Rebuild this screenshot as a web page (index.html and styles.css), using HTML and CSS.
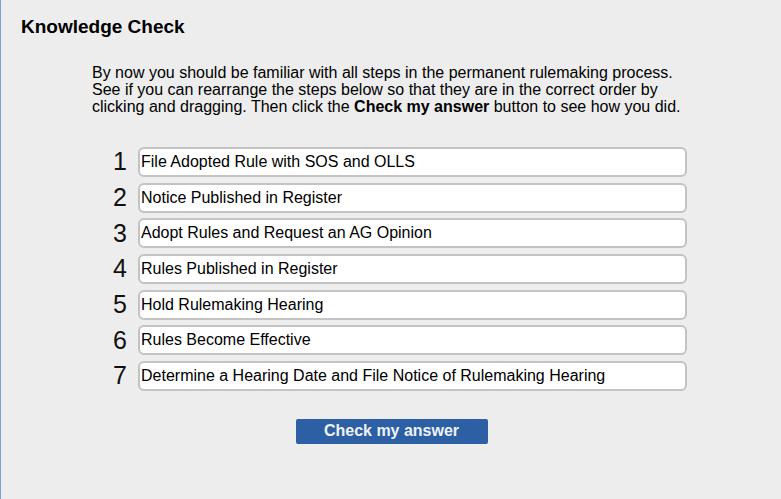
FILE: index.html
```html
<!DOCTYPE html>
<html>
<head>
<meta charset="utf-8">
<link rel="stylesheet" href="styles.css">
</head>
<body>
<div class="page">
  <h1 class="title">Knowledge Check</h1>
  <p class="intro">By now you should be familiar with all steps in the permanent rulemaking process. See if you can rearrange the steps below so that they are in the correct order by clicking and dragging. Then click the <b>Check my answer</b> button to see how you did.</p>
  <ol class="steps">
    <li class="step"><span class="num">1</span><span class="box">File Adopted Rule with SOS and OLLS</span></li>
    <li class="step"><span class="num">2</span><span class="box">Notice Published in Register</span></li>
    <li class="step"><span class="num">3</span><span class="box">Adopt Rules and Request an AG Opinion</span></li>
    <li class="step"><span class="num">4</span><span class="box">Rules Published in Register</span></li>
    <li class="step"><span class="num">5</span><span class="box">Hold Rulemaking Hearing</span></li>
    <li class="step"><span class="num">6</span><span class="box">Rules Become Effective</span></li>
    <li class="step"><span class="num">7</span><span class="box">Determine a Hearing Date and File Notice of Rulemaking Hearing</span></li>
  </ol>
  <div class="actions"><button class="check">Check my answer</button></div>
</div>
</body>
</html>
```

FILE: styles.css
```css
html, body {
  margin: 0;
  padding: 0;
  height: 100%;
}
body {
  background: #ededed;
  font-family: "Liberation Sans", Arial, sans-serif;
  color: #000;
}
.page {
  box-sizing: border-box;
  height: 499px;
  border-left: 1px solid #7fa0d8;
  padding: 14px 0 0 20px;
}
.title {
  margin: 0;
  font-size: 19px;
  font-weight: bold;
  line-height: 25px;
}
.intro {
  margin: 25px 0 0 71px;
  width: 596px;
  font-size: 16px;
  line-height: 17px;
}
.steps {
  list-style: none;
  margin: 32px 0 0 0;
  padding: 0 0 0 81px;
  display: flex;
  flex-direction: column;
  gap: 6px;
}
.step {
  display: flex;
  align-items: center;
  height: 29.7px;
}
.num {
  width: 36px;
  font-size: 25px;
  text-align: center;
  line-height: 29px;
  color: #111;
}
.box {
  box-sizing: border-box;
  width: 549px;
  height: 30px;
  border: 2px solid #c3c3c3;
  border-radius: 6px;
  background: #fff;
  font-size: 16px;
  line-height: 26px;
  padding-left: 1px;
  white-space: nowrap;
}
.actions {
  display: flex;
  justify-content: center;
  margin: 28px 0 0 0;
  padding-right: 19px;
}
.check {
  width: 192px;
  height: 25px;
  background: #2c5fa3;
  color: #eef2f8;
  border: none;
  border-radius: 2px;
  font-family: "Liberation Sans", Arial, sans-serif;
  font-size: 16px;
  font-weight: bold;
  padding: 0;
}
```
